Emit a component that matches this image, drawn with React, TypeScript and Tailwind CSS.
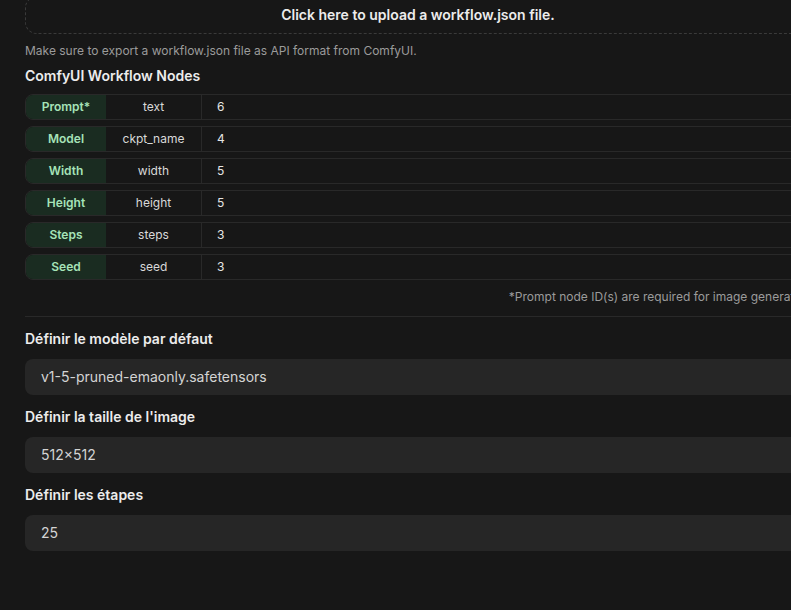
import React from "react";

const rows = [
  { label: "Prompt*", key: "text", val: "6" },
  { label: "Model", key: "ckpt_name", val: "4" },
  { label: "Width", key: "width", val: "5" },
  { label: "Height", key: "height", val: "5" },
  { label: "Steps", key: "steps", val: "3" },
  { label: "Seed", key: "seed", val: "3" },
];

const fields = [
  { label: "Définir le modèle par défaut", value: "v1-5-pruned-emaonly.safetensors" },
  { label: "Définir la taille de l'image", value: "512×512" },
  { label: "Définir les étapes", value: "25" },
];

export default function App() {
  return (
    <div
      className="w-[791px] h-[610px] overflow-hidden bg-[#171717]"
      style={{ fontFamily: "Inter, 'Noto Sans', sans-serif" }}
    >
      <div className="ml-[25px] w-[786px] -mt-[4px] flex flex-col">
        <div className="h-[38px] border border-dashed border-[#3a3a3a] rounded-xl flex items-center justify-center text-sm font-semibold text-[#ececec]">
          Click here to upload a workflow.json file.
        </div>
        <div className="mt-[9px] text-xs leading-4 text-[#9b9b9b]">
          Make sure to export a workflow.json file as API format from ComfyUI.
        </div>
        <div className="mt-[7px] text-sm leading-5 font-semibold text-[#ececec]">
          ComfyUI Workflow Nodes
        </div>
        <div className="mt-[8px] flex flex-col gap-[6px]">
          {rows.map((r) => (
            <div
              key={r.label}
              className="h-[26px] flex border border-[#292929] rounded-lg overflow-hidden text-xs"
            >
              <div className="w-[80px] bg-[#1a2c21] flex items-center justify-center font-semibold text-[#a6e3b8]">
                {r.label}
              </div>
              <div className="w-[96px] border-r border-[#292929] flex items-center justify-center text-[#d9d9d9]">
                {r.key}
              </div>
              <div className="flex-1 flex items-center pl-[15px] text-[#e5e5e5]">{r.val}</div>
            </div>
          ))}
        </div>
        <div className="mt-[9px] -mr-[4px] text-xs leading-4 text-[#9b9b9b] text-right">
          *Prompt node ID(s) are required for image generation.
        </div>
        <div className="mt-[11px] border-t border-[#292929]" />
        <div className="mt-[12px] flex flex-col">
          {fields.map((f, i) => (
            <div key={f.label} className={i > 0 ? "mt-[12px]" : ""}>
              <div className="text-sm leading-5 font-semibold text-[#ececec]">{f.label}</div>
              <div className="mt-[10px] h-9 rounded-lg bg-[#262626] flex items-center px-4 text-sm text-[#d4d4d4]">
                {f.value}
              </div>
            </div>
          ))}
        </div>
      </div>
    </div>
  );
}
